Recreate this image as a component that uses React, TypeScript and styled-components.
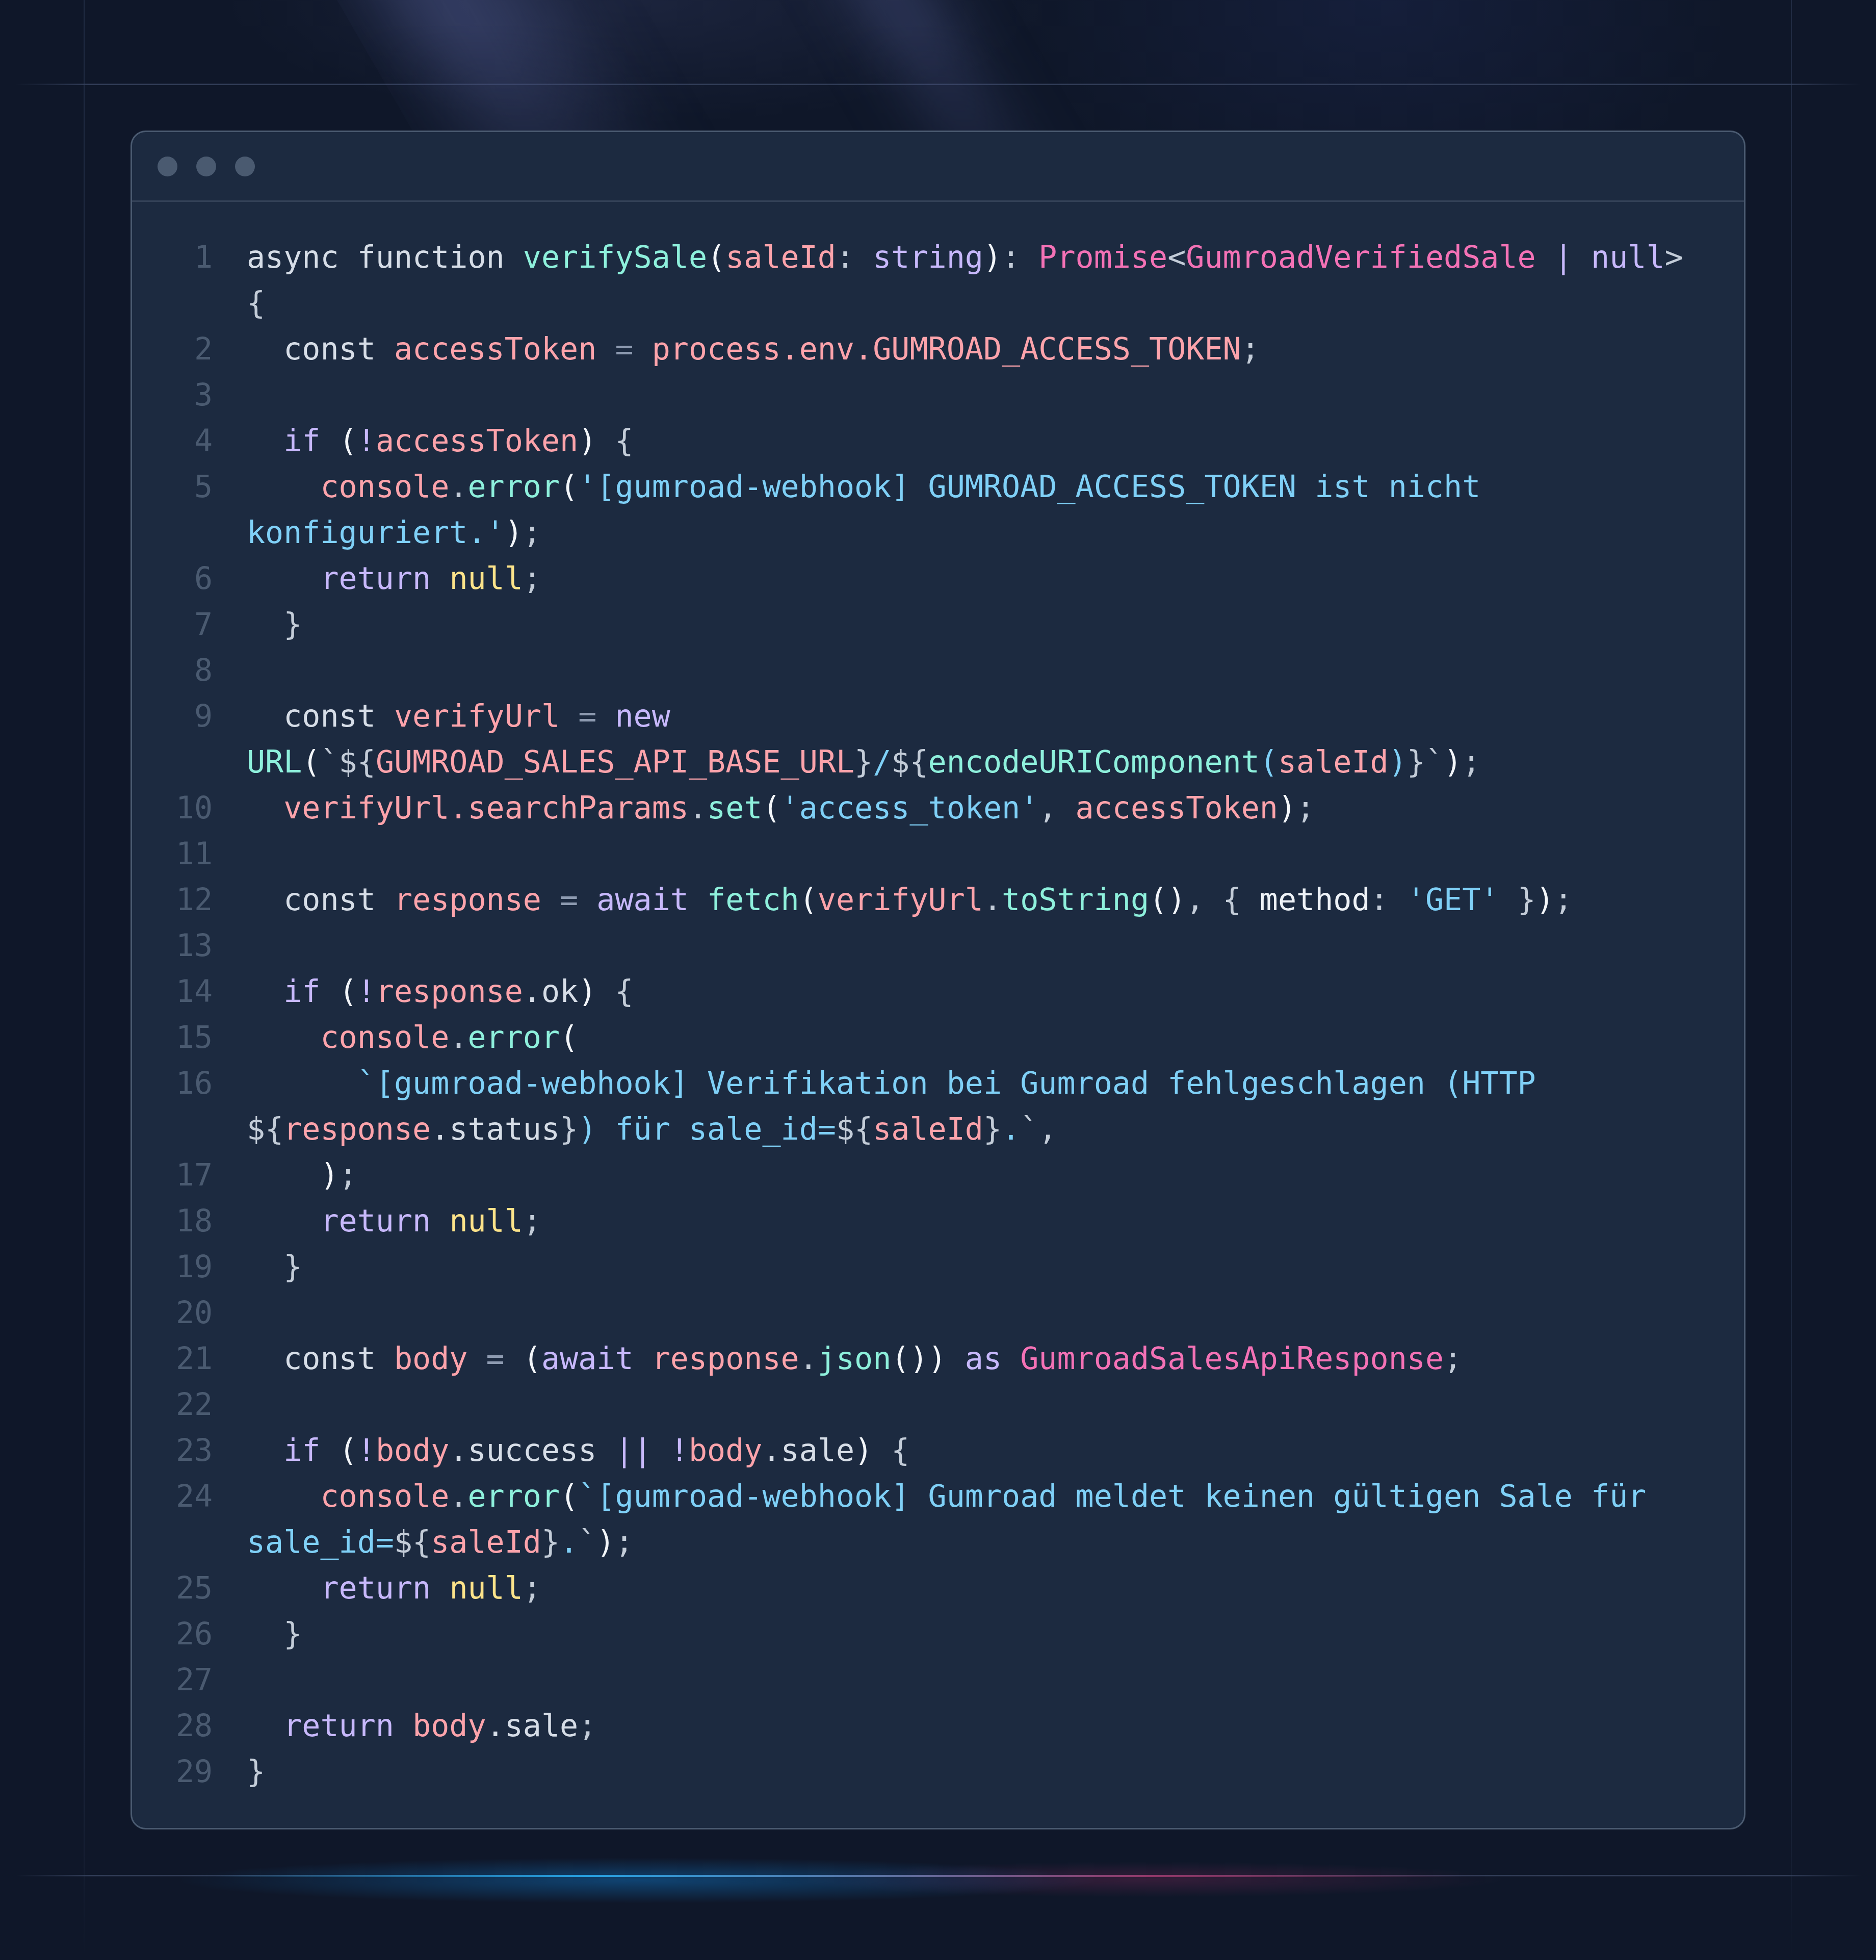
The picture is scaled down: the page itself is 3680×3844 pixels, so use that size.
import React from "react";
import styled, { createGlobalStyle } from "styled-components";

const Global = createGlobalStyle`
  html, body { margin: 0; padding: 0; background: #0f1729; }
  * { box-sizing: border-box; }
`;

const frameH =
  "linear-gradient(to right, rgba(56,68,96,0), rgba(56,68,96,0.85) 4%, rgba(56,68,96,0.85) 96%, rgba(56,68,96,0))";
const frameV =
  "linear-gradient(to bottom, rgba(40,52,78,0.7), rgba(40,52,78,0.5) 90%, rgba(40,52,78,0))";

/* The page: a dark canvas framed by faint guide lines, with light beams at the top
   and a coloured glow on the bottom guide line. All decoration lives in backgrounds
   and a pseudo-element; the window itself is placed by the page padding. */
const Page = styled.div`
  position: relative;
  width: 3680px;
  height: 3844px;
  overflow: hidden;
  padding: 256px 256px 0;
  background:
    linear-gradient(
        to right,
        rgba(14, 165, 233, 0),
        rgba(40, 165, 230, 0.95) 30%,
        rgba(110, 125, 175, 0.8) 55%,
        rgba(175, 60, 115, 0.75) 75%,
        rgba(175, 60, 115, 0)
      )
      420px 3677px / 2450px 4px no-repeat,
    radial-gradient(ellipse 900px 45px at 1250px 3688px, rgba(16, 120, 200, 0.45), rgba(16, 120, 200, 0) 100%),
    radial-gradient(ellipse 700px 35px at 2250px 3686px, rgba(150, 45, 100, 0.28), rgba(150, 45, 100, 0) 100%),
    ${frameH} 30px 164px / 3620px 3px no-repeat,
    ${frameH} 30px 3677px / 3620px 3px no-repeat,
    ${frameV} 164px 0 / 2px 100% no-repeat,
    ${frameV} 3513px 0 / 2px 100% no-repeat,
    radial-gradient(ellipse 1000px 600px at 2700px 0px, rgba(30, 42, 85, 0.4), rgba(30, 42, 85, 0) 70%),
    radial-gradient(ellipse 1000px 300px at 1250px 0px, rgba(40, 48, 80, 0.5), rgba(40, 48, 80, 0) 80%),
    #0f1729;

  &::before {
    content: "";
    position: absolute;
    top: -140px;
    left: 580px;
    width: 1500px;
    height: 740px;
    background: linear-gradient(
      to right,
      rgba(75, 85, 135, 0) 0%,
      rgba(75, 85, 135, 0.6) 14%,
      rgba(75, 85, 135, 0.35) 24%,
      rgba(75, 85, 135, 0) 34%,
      rgba(75, 85, 135, 0) 64%,
      rgba(75, 85, 135, 0.5) 73%,
      rgba(75, 85, 135, 0) 82%
    );
    -webkit-mask-image: linear-gradient(to bottom, #000 25%, rgba(0, 0, 0, 0.45) 60%, transparent 100%);
    mask-image: linear-gradient(to bottom, #000 25%, rgba(0, 0, 0, 0.45) 60%, transparent 100%);
    transform: skewX(30deg);
    transform-origin: top left;
    filter: blur(55px);
    pointer-events: none;
  }
`;

const Window = styled.div`
  position: relative;
  background: #1c2a40;
  border: 3px solid #4a5a70;
  border-radius: 30px;
  overflow: hidden;
`;

const TitleBar = styled.div`
  display: flex;
  align-items: center;
  gap: 37px;
  height: 137px;
  padding-left: 50px;
  border-bottom: 3px solid #334157;
`;

const Dot = styled.span`
  width: 39px;
  height: 39px;
  border-radius: 50%;
  background: #4a5a70;
`;

const Code = styled.div`
  display: flex;
  flex-direction: column;
  padding: 63px 60px 66px 86px;
  font-family: "DejaVu Sans Mono", "Liberation Mono", monospace;
  font-size: 60px;
  line-height: 90px;
  color: #d6dde7;
`;

const Row = styled.div`
  display: grid;
  grid-template-columns: 72px 1fr;
  column-gap: 67px;
  min-height: 90px;
`;

const LineNo = styled.span`
  text-align: right;
  color: #4a5a70;
`;

const Text = styled.span`
  white-space: pre-wrap;
  word-break: normal;
`;

const palette: Record<string, string> = {
  t: "#d6dde7",
  p: "#c3ccd8",
  w: "#f3f6fa",
  W: "#eef2f7",
  o: "#8d9ab0",
  v: "#fca3ab",
  f: "#8ef0dc",
  k: "#c7b8fb",
  s: "#7fd0f7",
  y: "#f472b6",
  n: "#fce38a",
};

const Tok = styled.span<{ $c: string }>`
  color: ${(p) => palette[p.$c]};
`;

type T = [string, string];

const lines: T[][] = [
  [["t", "async function "], ["f", "verifySale"], ["w", "("], ["v", "saleId"], ["p", ": "], ["k", "string"], ["w", ")"], ["p", ": "], ["y", "Promise"], ["p", "<"], ["y", "GumroadVerifiedSale"], ["k", " | null"], ["p", ">"], ["p", " {"]],
  [["t", "  const "], ["v", "accessToken"], ["o", " = "], ["v", "process.env.GUMROAD_ACCESS_TOKEN"], ["p", ";"]],
  [],
  [["k", "  if "], ["w", "("], ["k", "!"], ["v", "accessToken"], ["w", ")"], ["p", " {"]],
  [["t", "    "], ["v", "console"], ["p", "."], ["f", "error"], ["w", "("], ["s", "'[gumroad-webhook] GUMROAD_ACCESS_TOKEN ist nicht konfiguriert.'"], ["w", ")"], ["p", ";"]],
  [["k", "    return "], ["n", "null"], ["p", ";"]],
  [["p", "  }"]],
  [],
  [["t", "  const "], ["v", "verifyUrl"], ["o", " = "], ["k", "new "], ["f", "URL"], ["w", "("], ["p", "`${"], ["v", "GUMROAD_SALES_API_BASE_URL"], ["p", "}"], ["s", "/"], ["p", "${"], ["f", "encodeURIComponent"], ["s", "("], ["v", "saleId"], ["s", ")"], ["p", "}`"], ["w", ")"], ["p", ";"]],
  [["t", "  "], ["v", "verifyUrl.searchParams"], ["p", "."], ["f", "set"], ["w", "("], ["s", "'access_token'"], ["p", ", "], ["v", "accessToken"], ["w", ")"], ["p", ";"]],
  [],
  [["t", "  const "], ["v", "response"], ["o", " = "], ["k", "await "], ["f", "fetch"], ["w", "("], ["v", "verifyUrl"], ["p", "."], ["f", "toString"], ["w", "()"], ["p", ", { "], ["W", "method"], ["p", ": "], ["s", "'GET'"], ["p", " }"], ["w", ")"], ["p", ";"]],
  [],
  [["k", "  if "], ["w", "("], ["k", "!"], ["v", "response"], ["t", ".ok"], ["w", ")"], ["p", " {"]],
  [["t", "    "], ["v", "console"], ["p", "."], ["f", "error"], ["w", "("]],
  [["t", "      "], ["s", "`[gumroad-webhook] Verifikation bei Gumroad fehlgeschlagen (HTTP "], ["p", "${"], ["v", "response"], ["t", ".status"], ["p", "}"], ["s", ") für sale_id="], ["p", "${"], ["v", "saleId"], ["p", "}"], ["s", "."], ["p", "`,"]],
  [["t", "    "], ["w", ")"], ["p", ";"]],
  [["k", "    return "], ["n", "null"], ["p", ";"]],
  [["p", "  }"]],
  [],
  [["t", "  const "], ["v", "body"], ["o", " = "], ["w", "("], ["k", "await "], ["v", "response"], ["p", "."], ["f", "json"], ["w", "())"], ["k", " as "], ["y", "GumroadSalesApiResponse"], ["p", ";"]],
  [],
  [["k", "  if "], ["w", "("], ["k", "!"], ["v", "body"], ["t", ".success"], ["k", " || !"], ["v", "body"], ["t", ".sale"], ["w", ")"], ["p", " {"]],
  [["t", "    "], ["v", "console"], ["p", "."], ["f", "error"], ["w", "("], ["s", "`[gumroad-webhook] Gumroad meldet keinen gültigen Sale für sale_id="], ["p", "${"], ["v", "saleId"], ["p", "}"], ["s", "."], ["p", "`"], ["w", ")"], ["p", ";"]],
  [["k", "    return "], ["n", "null"], ["p", ";"]],
  [["p", "  }"]],
  [],
  [["k", "  return "], ["v", "body"], ["t", ".sale"], ["p", ";"]],
  [["p", "}"]],
];

export default function App() {
  return (
    <>
      <Global />
      <Page>
        <Window>
          <TitleBar>
            <Dot />
            <Dot />
            <Dot />
          </TitleBar>
          <Code>
            {lines.map((toks, i) => (
              <Row key={i}>
                <LineNo>{i + 1}</LineNo>
                <Text>
                  {toks.map(([c, s], j) => (
                    <Tok key={j} $c={c}>
                      {s}
                    </Tok>
                  ))}
                </Text>
              </Row>
            ))}
          </Code>
        </Window>
      </Page>
    </>
  );
}
